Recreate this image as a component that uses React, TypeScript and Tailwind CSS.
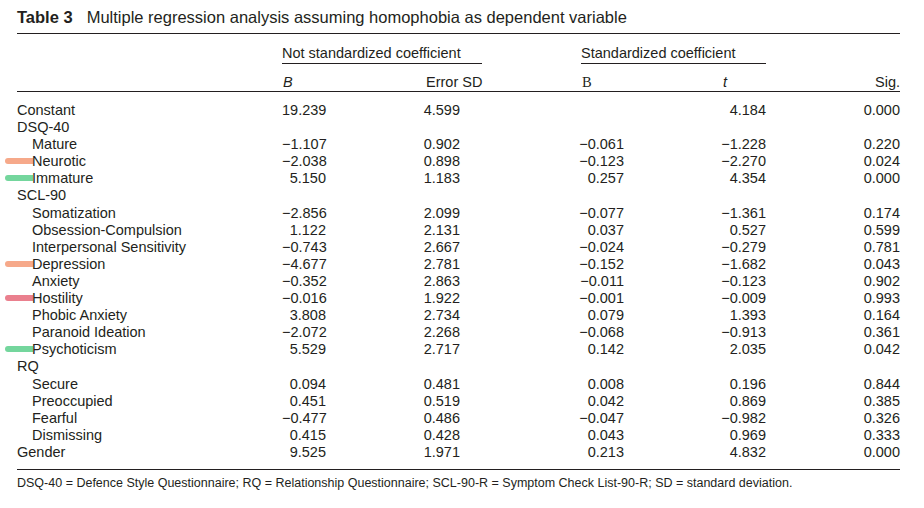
type Row = {
  label: string
  indent?: boolean
  mark?: string
  values?: [string, string, string, string, string]
}

const rows: Row[] = [
  { label: 'Constant', values: ['19.239', '4.599', '', '4.184', '0.000'] },
  { label: 'DSQ-40' },
  { label: 'Mature', indent: true, values: ['−1.107', '0.902', '−0.061', '−1.228', '0.220'] },
  { label: 'Neurotic', indent: true, mark: 'bg-[#f6a98a]', values: ['−2.038', '0.898', '−0.123', '−2.270', '0.024'] },
  { label: 'Immature', indent: true, mark: 'bg-[#74d69d]', values: ['5.150', '1.183', '0.257', '4.354', '0.000'] },
  { label: 'SCL-90' },
  { label: 'Somatization', indent: true, values: ['−2.856', '2.099', '−0.077', '−1.361', '0.174'] },
  { label: 'Obsession-Compulsion', indent: true, values: ['1.122', '2.131', '0.037', '0.527', '0.599'] },
  { label: 'Interpersonal Sensitivity', indent: true, values: ['−0.743', '2.667', '−0.024', '−0.279', '0.781'] },
  { label: 'Depression', indent: true, mark: 'bg-[#f6a98a]', values: ['−4.677', '2.781', '−0.152', '−1.682', '0.043'] },
  { label: 'Anxiety', indent: true, values: ['−0.352', '2.863', '−0.011', '−0.123', '0.902'] },
  { label: 'Hostility', indent: true, mark: 'bg-[#ea808e]', values: ['−0.016', '1.922', '−0.001', '−0.009', '0.993'] },
  { label: 'Phobic Anxiety', indent: true, values: ['3.808', '2.734', '0.079', '1.393', '0.164'] },
  { label: 'Paranoid Ideation', indent: true, values: ['−2.072', '2.268', '−0.068', '−0.913', '0.361'] },
  { label: 'Psychoticism', indent: true, mark: 'bg-[#74d69d]', values: ['5.529', '2.717', '0.142', '2.035', '0.042'] },
  { label: 'RQ' },
  { label: 'Secure', indent: true, values: ['0.094', '0.481', '0.008', '0.196', '0.844'] },
  { label: 'Preoccupied', indent: true, values: ['0.451', '0.519', '0.042', '0.869', '0.385'] },
  { label: 'Fearful', indent: true, values: ['−0.477', '0.486', '−0.047', '−0.982', '0.326'] },
  { label: 'Dismissing', indent: true, values: ['0.415', '0.428', '0.043', '0.969', '0.333'] },
  { label: 'Gender', values: ['9.525', '1.971', '0.213', '4.832', '0.000'] },
]

export default function App() {
  return (
    <div className="h-[508px] w-[924px] bg-white text-[#231f20] font-['Liberation_Sans',Arial,sans-serif]">
      <div className="ml-[17px] w-[883px]">
        {/* title */}
        <div className="h-[34px] border-b border-[#231f20] pt-[7px] text-[16.5px] leading-[21px] whitespace-nowrap">
          <span className="font-bold">Table 3</span>
          <span className="ml-[14px]">Multiple regression analysis assuming homophobia as dependent variable</span>
        </div>

        {/* spanning headers */}
        <div className="flex pt-[10px] text-[14.5px] leading-[19px]">
          <div className="w-[265px]" />
          <div className="w-[200px] border-b border-[#231f20]">Not standardized coefficient</div>
          <div className="w-[99px]" />
          <div className="w-[185px] border-b border-[#231f20]">Standardized coefficient</div>
        </div>

        {/* column headers */}
        <div className="flex border-b border-[#231f20] pt-[10px] text-[14.5px] leading-[17px] whitespace-nowrap">
          <div className="w-[265px]" />
          <div className="w-[44px] pl-[1px] italic">B</div>
          <div className="w-[134px] pl-[100px]">Error SD</div>
          <div className="w-[164px] pl-[122px] font-['Liberation_Serif',serif]">B</div>
          <div className="w-[142px] pl-[99px] italic">t</div>
          <div className="w-[134px] text-right">Sig.</div>
        </div>

        {/* body */}
        <div className="border-b border-[#231f20] pt-[10px] pb-[8px] text-[14.5px] leading-[17.1px]">
          {rows.map((r) => (
            <div key={r.label} className="flex h-[17.1px] whitespace-nowrap">
              <div className={`relative w-[265px] ${r.indent ? 'pl-[15px]' : ''}`}>
                {r.mark && (
                  <span className={`absolute left-[-12px] top-[5px] h-[6px] w-[28px] rounded-l-full rounded-r-[2px] ${r.mark}`} />
                )}
                <span className="relative">{r.label}</span>
              </div>
              {r.values && (
                <>
                  <div className="w-[44px] text-right">{r.values[0]}</div>
                  <div className="w-[134px] text-right">{r.values[1]}</div>
                  <div className="w-[164px] text-right">{r.values[2]}</div>
                  <div className="w-[142px] text-right">{r.values[3]}</div>
                  <div className="w-[134px] text-right">{r.values[4]}</div>
                </>
              )}
            </div>
          ))}
        </div>

        {/* footnote */}
        <div className="pt-[6px] text-[12.5px] leading-[14px] whitespace-nowrap">
          DSQ-40 = Defence Style Questionnaire; RQ = Relationship Questionnaire; SCL-90-R = Symptom Check List-90-R; SD = standard deviation.
        </div>
      </div>
    </div>
  )
}
